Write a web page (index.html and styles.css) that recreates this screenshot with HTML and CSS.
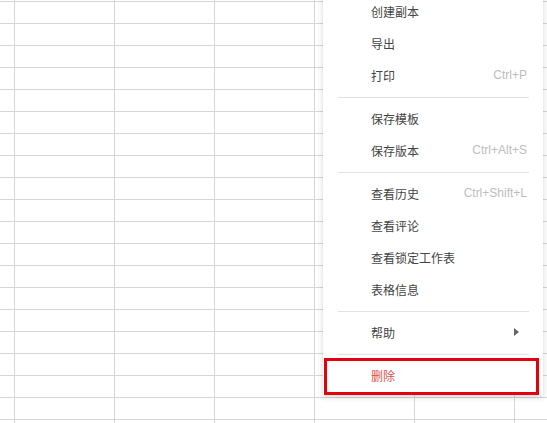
FILE: index.html
```html
<!DOCTYPE html>
<html lang="zh-CN">
<head>
<meta charset="utf-8">
<title>表格菜单</title>
<link rel="stylesheet" href="styles.css">
</head>
<body>
<div class="sheet"></div>
<ul class="menu">
  <li class="item"><span class="label">创建副本</span></li>
  <li class="item"><span class="label">导出</span></li>
  <li class="item"><span class="label">打印</span><span class="key">Ctrl+P</span></li>
  <li class="sep"></li>
  <li class="item"><span class="label">保存模板</span></li>
  <li class="item"><span class="label">保存版本</span><span class="key">Ctrl+Alt+S</span></li>
  <li class="sep"></li>
  <li class="item"><span class="label">查看历史</span><span class="key">Ctrl+Shift+L</span></li>
  <li class="item"><span class="label">查看评论</span></li>
  <li class="item"><span class="label">查看锁定工作表</span></li>
  <li class="item"><span class="label">表格信息</span></li>
  <li class="sep"></li>
  <li class="item"><span class="label">帮助</span><span class="arrow"></span></li>
  <li class="sep"></li>
  <li class="item danger"><span class="label">删除</span></li>
</ul>
</body>
</html>
```

FILE: styles.css
```css
html, body {
  margin: 0;
  padding: 0;
  width: 547px;
  height: 423px;
  overflow: hidden;
  background: #fff;
  font-family: "Noto Sans CJK SC", "Liberation Sans", sans-serif;
}

.sheet {
  width: 547px;
  height: 423px;
  background-color: #fff;
  background-image:
    linear-gradient(to right, #d6d6d6 0, #d6d6d6 1px, transparent 1px),
    linear-gradient(to bottom, #d6d6d6 0, #d6d6d6 1px, transparent 1px);
  background-size: 100px 100%, 100% 22px;
  background-position: 14px 0, 0 1px;
}

.menu {
  position: absolute;
  left: 323px;
  top: -9px;
  width: 220px;
  margin: 0;
  padding: 4px 0;
  list-style: none;
  background: #fff;
  box-shadow: 0 2px 6px rgba(0, 0, 0, 0.16);
}

.item {
  position: relative;
  display: flex;
  align-items: center;
  justify-content: space-between;
  height: 32px;
  padding: 0 16px 0 48px;
  font-size: 12px;
  color: #444;
}

.key {
  font-family: "Liberation Sans", Arial, sans-serif;
  font-size: 12px;
  color: #bdbdbd;
}

.arrow {
  width: 0;
  height: 0;
  margin-right: 8px;
  border-top: 4px solid transparent;
  border-bottom: 4px solid transparent;
  border-left: 5px solid #666;
}

.sep {
  height: 1px;
  margin: 6px 14px 4px 15px;
  background: #e2e2e2;
}

.danger {
  color: #d9534f;
}

.danger::after {
  content: "";
  position: absolute;
  left: 1px;
  top: -1px;
  right: 4px;
  bottom: -4px;
  border: 3px solid #e3000f;
}
```
